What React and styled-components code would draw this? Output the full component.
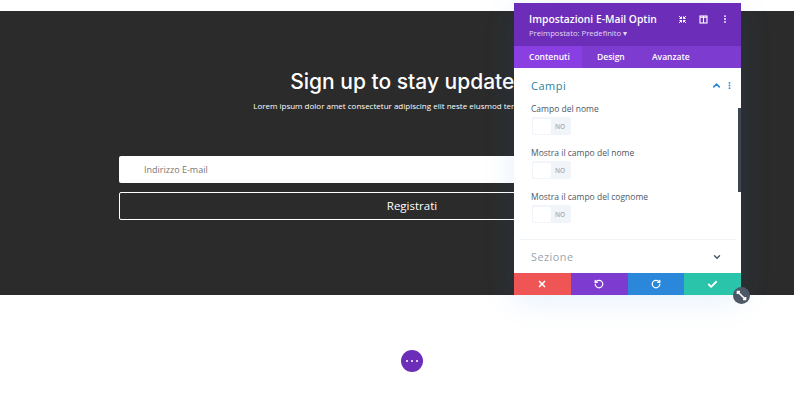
import React from 'react';
import styled, { createGlobalStyle } from 'styled-components';
import { ChevronUp, ChevronDown, RotateCcw, RotateCw, X, Check, MoreVertical } from 'lucide-react';

const Global = createGlobalStyle`
html, body { margin: 0; padding: 0; background: #fff; }
body { font-family: "Open Sans", "Liberation Sans", sans-serif; overflow: hidden; }
`

const Page = styled.div`
position: relative;
width: 794px;
height: 401px;
padding-top: 11px;
box-sizing: border-box;
overflow: hidden;
`

const Hero = styled.section`
height: 284px;
background: #2b2b2b;
padding: 56px 89px 0 119px;
box-sizing: border-box;
display: flex;
flex-direction: column;
align-items: center;
`

const Title = styled.h1`
margin: 0;
font-family: "Inter", "Open Sans", sans-serif;
font-weight: 500;
font-size: 21px;
line-height: 30px;
color: #fff;
white-space: nowrap;
`

const Lead = styled.p`
margin: 2px 0 0;
font-size: 8px;
line-height: 14px;
color: #fff;
white-space: nowrap;
`

const EmailInput = styled.div`
align-self: stretch;
margin-top: 43px;
height: 27px;
background: #fff;
border-radius: 2px;
padding-left: 25px;
font-size: 9px;
line-height: 27px;
color: #777;
`

const SubmitButton = styled.div`
align-self: stretch;
margin-top: 9px;
height: 28px;
border: 1px solid #fff;
border-radius: 2px;
box-sizing: border-box;
text-align: center;
font-size: 11.5px;
line-height: 26px;
color: #fff;
`

const AddRow = styled.div`
display: flex;
justify-content: center;
padding: 55px 0 0 30px;
`

const AddButton = styled.div`
width: 22px;
height: 22px;
border-radius: 50%;
background: #6c2eb9;
display: flex;
align-items: center;
justify-content: center;
gap: 3px;
`

const Dot = styled.span`
width: 2px;
height: 2px;
border-radius: 50%;
background: #fff;
`

const Panel = styled.div`
position: absolute;
left: 514px;
top: 3px;
width: 227px;
height: 292px;
display: flex;
flex-direction: column;
background: #fff;
box-shadow: 0 5px 30px rgba(43, 135, 218, 0.12);
`

const PanelHeader = styled.header`
height: 43px;
flex: none;
background: #6c2eb9;
padding: 9px 11px 0 15px;
box-sizing: border-box;
display: flex;
justify-content: space-between;
color: #fff;
`

const HeaderTitle = styled.div`
font-size: 10.3px;
font-weight: 600;
line-height: 14px;
white-space: nowrap;
`

const HeaderSub = styled.div`
font-size: 7.7px;
line-height: 12px;
margin-top: 1px;
color: #e4d6f5;
white-space: nowrap;
`

const HeaderIcons = styled.div`
display: flex;
gap: 12px;
height: 14px;
align-items: center;
`

const Tabs = styled.nav`
height: 22px;
flex: none;
background: #7e3bd0;
display: flex;
`

const Tab = styled.div`
padding-left: 15px;
width: ${p => p.$w}px;
box-sizing: border-box;
font-size: 8.5px;
font-weight: 600;
line-height: 22px;
color: #fff;
background: ${p => (p.$active ? '#8a3fe2' : 'transparent')};
`

const PanelBody = styled.div`
position: relative;
flex: 1;
overflow: hidden;
`

const Scrollbar = styled.div`
position: absolute;
right: 0;
top: 40px;
width: 3px;
height: 84px;
background: #3d4650;
`

const GroupHead = styled.div`
display: flex;
align-items: center;
justify-content: space-between;
padding: 0 7px 0 17px;
height: ${p => p.$h}px;
`

const GroupTitle = styled.div`
font-size: ${p => (p.$open ? 11 : 10.8)}px;
letter-spacing: 0.5px;
color: ${p => (p.$open ? '#2a7f9e' : '#9aa3ad')};
`

const GroupIcons = styled.div`
display: flex;
align-items: center;
gap: 3px;
color: ${p => (p.$open ? '#2b87da' : '#4c5866')};
`

const IconSpacer = styled.span`
width: 9px;
`

const Fields = styled.div`
height: 137px;
border-bottom: 1px solid #f1f3f6;
margin: 0 5px;
padding: 0 12px;
box-sizing: content-box;
`

const Field = styled.div`
height: 44px;
`

const Label = styled.div`
font-size: 8.5px;
line-height: 14px;
color: #4c5866;
white-space: nowrap;
`

const Toggle = styled.div`
margin-top: 1px;
margin-left: 1px;
width: 39px;
height: 18px;
background: #f1f5f9;
border-radius: 2px;
display: flex;
align-items: center;
padding: 1px;
box-sizing: border-box;
`

const Knob = styled.div`
width: 18px;
height: 15px;
background: #fff;
border-radius: 2px;
`

const ToggleText = styled.span`
font-size: 6.5px;
font-weight: 600;
color: #a4adb8;
margin-left: 4px;
`

const Actions = styled.footer`
height: 22px;
flex: none;
display: grid;
grid-template-columns: repeat(4, 1fr);
`

const Action = styled.div`
display: flex;
align-items: center;
justify-content: center;
background: ${p => p.$bg};
color: #fff;
`

const Resize = styled.div`
position: absolute;
left: 733px;
top: 287px;
width: 17px;
height: 17px;
border-radius: 50%;
background: #4c5866;
display: flex;
align-items: center;
justify-content: center;
`

const fields = ['Campo del nome', 'Mostra il campo del nome', 'Mostra il campo del cognome'];

export default function App() {
  return (
    <Page>
      <Global />
      <Hero>
        <Title>Sign up to stay updated!</Title>
        <Lead>Lorem ipsum dolor amet consectetur adipiscing elit neste eiusmod tempor incididunt</Lead>
        <EmailInput>Indirizzo E-mail</EmailInput>
        <SubmitButton>Registrati</SubmitButton>
      </Hero>
      <AddRow>
        <AddButton><Dot /><Dot /><Dot /></AddButton>
      </AddRow>

      <Panel>
        <PanelHeader>
          <div>
            <HeaderTitle>Impostazioni E-Mail Optin</HeaderTitle>
            <HeaderSub>Preimpostato: Predefinito ▾</HeaderSub>
          </div>
          <HeaderIcons>
            <svg width="9" height="9" viewBox="0 0 9 9" fill="none" stroke="#fff" strokeWidth="1">
              <path d="M1 1l2.5 2.5M8 1L5.5 3.5M1 8l2.5-2.5M8 8L5.5 5.5M3.5 1.5v2h-2M5.5 1.5v2h2M3.5 7.5v-2h-2M5.5 7.5v-2h2" />
            </svg>
            <svg width="9" height="9" viewBox="0 0 9 9" fill="none" stroke="#fff" strokeWidth="1.1">
              <rect x="1" y="1" width="7" height="7" />
              <path d="M4.5 1v7M1 2.2h7" />
            </svg>
            <MoreVertical size={10} strokeWidth={2.5} />
          </HeaderIcons>
        </PanelHeader>
        <Tabs>
          <Tab $active $w={68}>Contenuti</Tab>
          <Tab $w={55}>Design</Tab>
          <Tab $w={70}>Avanzate</Tab>
        </Tabs>
        <PanelBody>
          <Scrollbar />
          <GroupHead $h={34}>
            <GroupTitle $open>Campi</GroupTitle>
            <GroupIcons $open>
              <ChevronUp size={11} strokeWidth={3.5} />
              <MoreVertical size={9} strokeWidth={3} />
            </GroupIcons>
          </GroupHead>
          <Fields>
            {fields.map(f => (
              <Field key={f}>
                <Label>{f}</Label>
                <Toggle><Knob /><ToggleText>NO</ToggleText></Toggle>
              </Field>
            ))}
          </Fields>
          <GroupHead $h={33}>
            <GroupTitle>Sezione</GroupTitle>
            <GroupIcons>
              <ChevronDown size={10} strokeWidth={3.5} />
              <IconSpacer />
            </GroupIcons>
          </GroupHead>
        </PanelBody>
        <Actions>
          <Action $bg="#ef5555"><X size={10} strokeWidth={4} /></Action>
          <Action $bg="#7e3bd0"><RotateCcw size={10} strokeWidth={3} /></Action>
          <Action $bg="#2b87da"><RotateCw size={10} strokeWidth={3} /></Action>
          <Action $bg="#29c4a9"><Check size={11} strokeWidth={4} /></Action>
        </Actions>
      </Panel>
      <Resize>
        <svg width="11" height="11" viewBox="0 0 11 11" fill="none" stroke="#fff" strokeWidth="1.6">
          <path d="M2.5 2.5l6 6M1.5 4V1.5H4M9.5 7v2.5H7" />
        </svg>
      </Resize>
    </Page>
  );
}
